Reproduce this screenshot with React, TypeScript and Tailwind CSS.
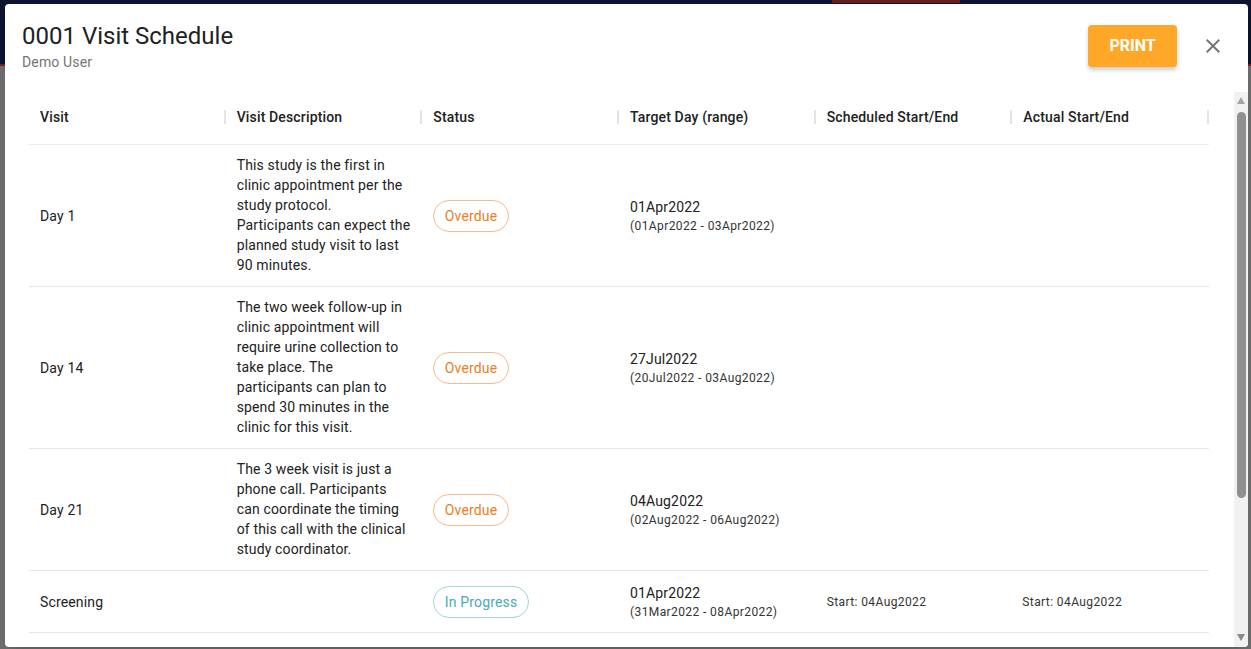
import React from 'react';

type Visit = {
  name: string;
  description: string[];
  status: 'Overdue' | 'In Progress';
  target: string;
  range: string;
  scheduled?: string;
  actual?: string;
};

const visits: Visit[] = [
  {
    name: 'Day 1',
    description: [
      'This study is the first in',
      'clinic appointment per the',
      'study protocol.',
      'Participants can expect the',
      'planned study visit to last',
      '90 minutes.',
    ],
    status: 'Overdue',
    target: '01Apr2022',
    range: '(01Apr2022 - 03Apr2022)',
  },
  {
    name: 'Day 14',
    description: [
      'The two week follow-up in',
      'clinic appointment will',
      'require urine collection to',
      'take place. The',
      'participants can plan to',
      'spend 30 minutes in the',
      'clinic for this visit.',
    ],
    status: 'Overdue',
    target: '27Jul2022',
    range: '(20Jul2022 - 03Aug2022)',
  },
  {
    name: 'Day 21',
    description: [
      'The 3 week visit is just a',
      'phone call. Participants',
      'can coordinate the timing',
      'of this call with the clinical',
      'study coordinator.',
    ],
    status: 'Overdue',
    target: '04Aug2022',
    range: '(02Aug2022 - 06Aug2022)',
  },
  {
    name: 'Screening',
    description: [],
    status: 'In Progress',
    target: '01Apr2022',
    range: '(31Mar2022 - 08Apr2022)',
    scheduled: 'Start: 04Aug2022',
    actual: 'Start: 04Aug2022',
  },
  {
    name: 'Day 28',
    description: [
      'The final study visit will be',
      'in clinic and participants',
      'should plan for 60 minutes.',
    ],
    status: 'Overdue',
    target: '11Aug2022',
    range: '(09Aug2022 - 13Aug2022)',
  },
];

const columns = [
  'Visit',
  'Visit Description',
  'Status',
  'Target Day (range)',
  'Scheduled Start/End',
  'Actual Start/End',
];

const StatusChip = ({ status }: { status: Visit['status'] }) => (
  <span
    className={`inline-flex h-8 items-center rounded-full border px-[10.5px] text-sm tracking-[0.15px] ${
      status === 'Overdue'
        ? 'border-[#f6b98a] text-[#ef7d22]'
        : 'border-[#9fd5db] text-[#4aaab6]'
    }`}
  >
    {status}
  </span>
);

const App = () => {
  return (
    <div className="relative h-[649px] w-[1251px] overflow-hidden bg-[#6f6f6f] font-['Roboto',sans-serif]">
      {/* backdrop: dimmed app header */}
      <div className="h-[64px] bg-[#0d1430]">
        <div className="ml-[832px] h-[3px] w-[128px] bg-[#6b1a1c]"></div>
      </div>
      <div className="h-[2px] bg-[#7a1f20]"></div>

      {/* dialog */}
      <div className="absolute left-[5px] top-[4px] flex h-[643px] w-[1243px] flex-col overflow-hidden rounded bg-white shadow-xl">
        <div className="flex h-[88px] shrink-0 items-start justify-between pl-[17px] pr-[23px] pt-4">
          <div>
            <h1 className="text-2xl leading-8 text-[#212121]">
              0001 Visit Schedule
            </h1>
            <p className="text-sm leading-5 tracking-[0.15px] text-[#757575]">
              Demo User
            </p>
          </div>
          <div className="mt-[5px] flex items-center gap-6">
            <button className="flex h-[42px] w-[89px] items-center justify-center rounded bg-[#ffa726] text-base font-bold text-white shadow-[0_3px_4px_rgba(0,0,0,0.2)]">
              PRINT
            </button>
            <svg width="24" height="24" viewBox="0 0 24 24" fill="#757575">
              <path d="M19 6.41 17.59 5 12 10.59 6.41 5 5 6.41 10.59 12 5 17.59 6.41 19 12 13.41 17.59 19 19 17.59 13.41 12z" />
            </svg>
          </div>
        </div>

        <div className="flex min-h-0 flex-1">
          <div className="min-w-0 flex-1 overflow-hidden pl-6 pr-[25px]">
            <div className="w-[1180px] tracking-[0.15px]">
              {/* header row */}
              <div className="grid h-[53px] grid-cols-6 border-b border-[#ececec] pb-[3px]">
                {columns.map((col) => (
                  <div
                    key={col}
                    className="flex items-center justify-between pl-[11px]"
                  >
                    <span className="text-sm font-medium text-[#212121]">
                      {col}
                    </span>
                    <span className="h-[14px] w-[2px] bg-[#e4e4e4]"></span>
                  </div>
                ))}
              </div>

              {visits.map((v) => (
                <div
                  key={v.name}
                  className="grid grid-cols-6 border-b border-[#e6e6e6] text-[#212121]"
                >
                  <div className="flex items-center px-[11px] text-sm">
                    {v.name}
                  </div>
                  <div className="pb-[11px] pl-[11px] pr-[9px] pt-[10px] text-sm leading-5">
                    {v.description.map((line) => (
                      <div key={line}>{line}</div>
                    ))}
                  </div>
                  <div className="flex items-center px-[11px] py-[14px]">
                    <StatusChip status={v.status} />
                  </div>
                  <div className="flex flex-col justify-center px-[11px] py-[11.5px]">
                    <span className="text-sm leading-5">{v.target}</span>
                    <span className="text-xs leading-[18px] tracking-[0.4px] text-[#333]">
                      {v.range}
                    </span>
                  </div>
                  <div className="flex items-center px-[11px] text-xs tracking-[0.4px] text-[#333]">
                    {v.scheduled}
                  </div>
                  <div className="flex items-center px-[10px] text-xs tracking-[0.4px] text-[#333]">
                    {v.actual}
                  </div>
                </div>
              ))}
            </div>
          </div>

          {/* scrollbar */}
          <div className="flex w-[14px] shrink-0 flex-col items-center bg-[#f1f1f1] pb-[6px] pt-[5px]">
            <div className="h-0 w-0 border-x-[4px] border-b-[7px] border-x-transparent border-b-[#a3a3a3]"></div>
            <div className="mt-[8px] h-[386px] w-[9px] rounded-full bg-[#909090]"></div>
            <div className="flex-1"></div>
            <div className="h-0 w-0 border-x-[4px] border-t-[7px] border-x-transparent border-t-[#8a8a8a]"></div>
          </div>
        </div>
      </div>
    </div>
  );
};

export default App;
